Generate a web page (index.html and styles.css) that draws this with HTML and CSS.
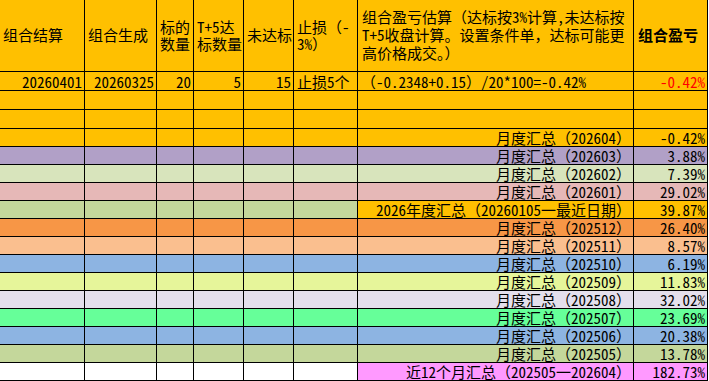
FILE: index.html
```html
<!DOCTYPE html>
<html lang="zh-CN">
<head>
<meta charset="utf-8">
<title>组合盈亏</title>
<link rel="stylesheet" href="styles.css">
</head>
<body>
<div class="sheet">
  <div class="row hdr bg-yellow">
    <div class="cell">组合结算</div>
    <div class="cell">组合生成</div>
    <div class="cell">标的<br>数量</div>
    <div class="cell">T+5达<br>标数量</div>
    <div class="cell">未达标</div>
    <div class="cell">止损（-<br>3%）</div>
    <div class="cell note">组合盈亏估算（达标按3%计算,未达标按<br>T+5收盘计算。设置条件单，达标可能更<br>高价格成交。）</div>
    <div class="cell title">组合盈亏</div>
  </div>

  <div class="row tall bg-yellow">
    <div class="cell num">20260401</div>
    <div class="cell num">20260325</div>
    <div class="cell num">20</div>
    <div class="cell num">5</div>
    <div class="cell num">15</div>
    <div class="cell txt">止损5个</div>
    <div class="cell txt">（-0.2348+0.15）/20*100=-0.42%</div>
    <div class="cell num red">-0.42%</div>
  </div>
  <div class="row tall bg-yellow">
    <div class="cell"></div><div class="cell"></div><div class="cell"></div><div class="cell"></div>
    <div class="cell"></div><div class="cell"></div><div class="cell"></div><div class="cell"></div>
  </div>
  <div class="row tall bg-yellow">
    <div class="cell"></div><div class="cell"></div><div class="cell"></div><div class="cell"></div>
    <div class="cell"></div><div class="cell"></div><div class="cell"></div><div class="cell"></div>
  </div>

  <div class="row bg-yellow">
    <div class="cell"></div><div class="cell"></div><div class="cell"></div><div class="cell"></div>
    <div class="cell"></div><div class="cell"></div>
    <div class="cell num">月度汇总（202604）</div>
    <div class="cell num">-0.42%</div>
  </div>
  <div class="row bg-purple">
    <div class="cell"></div><div class="cell"></div><div class="cell"></div><div class="cell"></div>
    <div class="cell"></div><div class="cell"></div>
    <div class="cell num">月度汇总（202603）</div>
    <div class="cell num">3.88%</div>
  </div>
  <div class="row bg-sage">
    <div class="cell"></div><div class="cell"></div><div class="cell"></div><div class="cell"></div>
    <div class="cell"></div><div class="cell"></div>
    <div class="cell num">月度汇总（202602）</div>
    <div class="cell num">7.39%</div>
  </div>
  <div class="row bg-rose">
    <div class="cell"></div><div class="cell"></div><div class="cell"></div><div class="cell"></div>
    <div class="cell"></div><div class="cell"></div>
    <div class="cell num">月度汇总（202601）</div>
    <div class="cell num">29.02%</div>
  </div>
  <div class="row bg-olive">
    <div class="cell"></div><div class="cell"></div><div class="cell"></div><div class="cell"></div>
    <div class="cell"></div><div class="cell"></div>
    <div class="cell num cell-yellow">2026年度汇总（20260105一最近日期）</div>
    <div class="cell num cell-yellow">39.87%</div>
  </div>
  <div class="row bg-orange">
    <div class="cell"></div><div class="cell"></div><div class="cell"></div><div class="cell"></div>
    <div class="cell"></div><div class="cell"></div>
    <div class="cell num">月度汇总（202512）</div>
    <div class="cell num">26.40%</div>
  </div>
  <div class="row bg-peach">
    <div class="cell"></div><div class="cell"></div><div class="cell"></div><div class="cell"></div>
    <div class="cell"></div><div class="cell"></div>
    <div class="cell num">月度汇总（202511）</div>
    <div class="cell num">8.57%</div>
  </div>
  <div class="row bg-blue">
    <div class="cell"></div><div class="cell"></div><div class="cell"></div><div class="cell"></div>
    <div class="cell"></div><div class="cell"></div>
    <div class="cell num">月度汇总（202510）</div>
    <div class="cell num">6.19%</div>
  </div>
  <div class="row bg-lime">
    <div class="cell"></div><div class="cell"></div><div class="cell"></div><div class="cell"></div>
    <div class="cell"></div><div class="cell"></div>
    <div class="cell num">月度汇总（202509）</div>
    <div class="cell num">11.83%</div>
  </div>
  <div class="row bg-lavender">
    <div class="cell"></div><div class="cell"></div><div class="cell"></div><div class="cell"></div>
    <div class="cell"></div><div class="cell"></div>
    <div class="cell num">月度汇总（202508）</div>
    <div class="cell num">32.02%</div>
  </div>
  <div class="row bg-mint">
    <div class="cell"></div><div class="cell"></div><div class="cell"></div><div class="cell"></div>
    <div class="cell"></div><div class="cell"></div>
    <div class="cell num">月度汇总（202507）</div>
    <div class="cell num">23.69%</div>
  </div>
  <div class="row bg-blue">
    <div class="cell"></div><div class="cell"></div><div class="cell"></div><div class="cell"></div>
    <div class="cell"></div><div class="cell"></div>
    <div class="cell num">月度汇总（202506）</div>
    <div class="cell num">20.38%</div>
  </div>
  <div class="row bg-olive">
    <div class="cell"></div><div class="cell"></div><div class="cell"></div><div class="cell"></div>
    <div class="cell"></div><div class="cell"></div>
    <div class="cell num">月度汇总（202505）</div>
    <div class="cell num">13.78%</div>
  </div>
  <div class="row bg-white">
    <div class="cell"></div><div class="cell"></div><div class="cell"></div><div class="cell"></div>
    <div class="cell"></div><div class="cell"></div>
    <div class="cell num cell-pink">近12个月汇总（202505一202604）</div>
    <div class="cell num cell-pink">182.73%</div>
  </div>
</div>
</body>
</html>
```

FILE: styles.css
```css
html, body {
  margin: 0;
  padding: 0;
  background: #ffffff;
}

body {
  font-family: "Noto Sans Mono CJK SC", "Noto Sans CJK SC", "Liberation Mono", monospace;
  font-size: 15px;
  color: #000000;
}

.sheet {
  display: grid;
  grid-template-columns: 85px 72px 37px 50px 50px 64px 276px 74px;
  grid-template-rows: 72px 19px 19px 19px repeat(14, 18px);
  width: 708px;
}

.row {
  display: contents;
}

.cell {
  box-sizing: border-box;
  border-right: 1px solid #000000;
  border-bottom: 1px solid #000000;
  display: flex;
  align-items: flex-end;
  padding: 0 2px;
  line-height: 17px;
  white-space: nowrap;
}

.hdr .cell {
  align-items: center;
  padding: 0 3px 2px;
  line-height: 17px;
}

.hdr .note {
  padding-left: 4px;
  line-height: 18px;
}

.hdr .title {
  font-weight: bold;
  padding-left: 4px;
}

.num {
  justify-content: flex-end;
}

.txt {
  padding-left: 3px;
}

.red {
  color: #ff0000;
}

.bg-yellow > .cell { background: #ffc000; }
.bg-purple > .cell { background: #b1a0c7; }
.bg-sage > .cell { background: #d8e4bc; }
.bg-rose > .cell { background: #e6b8b7; }
.bg-olive > .cell { background: #c4d79b; }
.bg-orange > .cell { background: #f79646; }
.bg-peach > .cell { background: #fabf8f; }
.bg-blue > .cell { background: #8db4e2; }
.bg-lime > .cell { background: #e6f59a; }
.bg-lavender > .cell { background: #e4dfec; }
.bg-mint > .cell { background: #66ff99; }
.bg-white > .cell { background: #ffffff; }

.row > .cell-yellow { background: #ffc000; }
.row > .cell-pink { background: #ff99ff; }
```
